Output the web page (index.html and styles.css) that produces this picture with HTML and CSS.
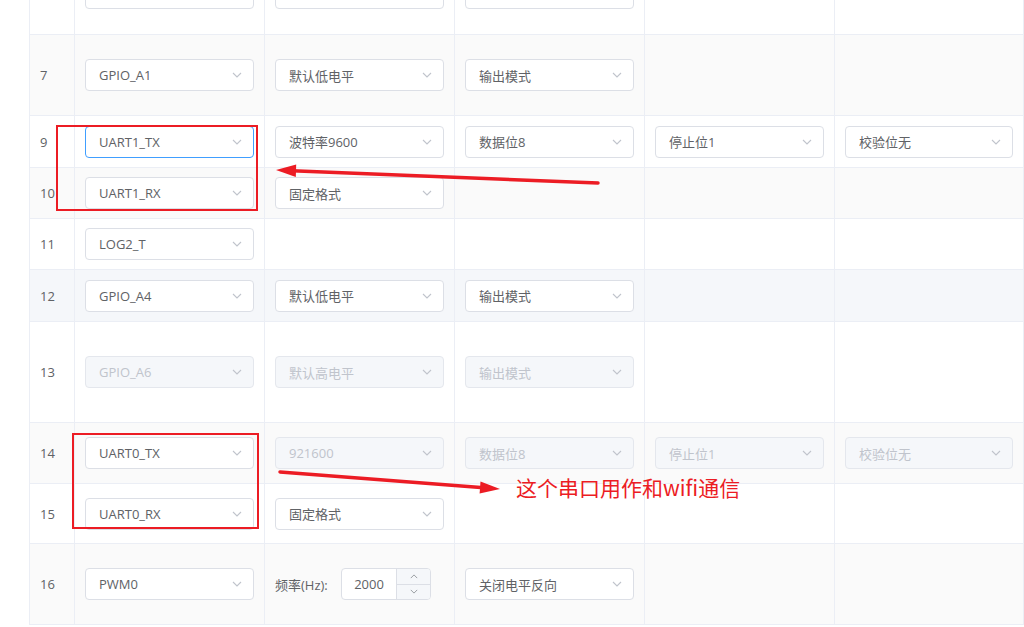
FILE: index.html
```html
<!DOCTYPE html>
<html lang="zh-CN">
<head>
<meta charset="utf-8">
<title>Pin config</title>
<link rel="stylesheet" href="styles.css">
</head>
<body>
<div class="page">
<table class="grid">
<colgroup>
<col class="c-idx"><col class="c-w"><col class="c-w"><col class="c-w"><col class="c-w"><col class="c-last">
</colgroup>
<tbody>
<tr class="h81 first">
<td class="idx"></td>
<td><div class="sel"><span>LOG2_R</span><svg viewBox="0 0 10 6"><path d="M1 1L5 5L9 1"/></svg></div></td>
<td><div class="sel"><span></span><svg viewBox="0 0 10 6"><path d="M1 1L5 5L9 1"/></svg></div></td>
<td><div class="sel"><span></span><svg viewBox="0 0 10 6"><path d="M1 1L5 5L9 1"/></svg></div></td>
<td></td><td></td>
</tr>
<tr class="h81 stripe">
<td class="idx">7</td>
<td><div class="sel"><span>GPIO_A1</span><svg viewBox="0 0 10 6"><path d="M1 1L5 5L9 1"/></svg></div></td>
<td><div class="sel"><span>默认低电平</span><svg viewBox="0 0 10 6"><path d="M1 1L5 5L9 1"/></svg></div></td>
<td><div class="sel"><span>输出模式</span><svg viewBox="0 0 10 6"><path d="M1 1L5 5L9 1"/></svg></div></td>
<td></td><td></td>
</tr>
<tr class="h52">
<td class="idx">9</td>
<td><div class="sel focus"><span>UART1_TX</span><svg viewBox="0 0 10 6"><path d="M1 1L5 5L9 1"/></svg></div></td>
<td><div class="sel"><span>波特率9600</span><svg viewBox="0 0 10 6"><path d="M1 1L5 5L9 1"/></svg></div></td>
<td><div class="sel"><span>数据位8</span><svg viewBox="0 0 10 6"><path d="M1 1L5 5L9 1"/></svg></div></td>
<td><div class="sel"><span>停止位1</span><svg viewBox="0 0 10 6"><path d="M1 1L5 5L9 1"/></svg></div></td>
<td><div class="sel"><span>校验位无</span><svg viewBox="0 0 10 6"><path d="M1 1L5 5L9 1"/></svg></div></td>
</tr>
<tr class="h51 stripe">
<td class="idx">10</td>
<td><div class="sel"><span>UART1_RX</span><svg viewBox="0 0 10 6"><path d="M1 1L5 5L9 1"/></svg></div></td>
<td><div class="sel"><span>固定格式</span><svg viewBox="0 0 10 6"><path d="M1 1L5 5L9 1"/></svg></div></td>
<td></td><td></td><td></td>
</tr>
<tr class="h51">
<td class="idx">11</td>
<td><div class="sel"><span>LOG2_T</span><svg viewBox="0 0 10 6"><path d="M1 1L5 5L9 1"/></svg></div></td>
<td></td><td></td><td></td><td></td>
</tr>
<tr class="h52 hover">
<td class="idx">12</td>
<td><div class="sel"><span>GPIO_A4</span><svg viewBox="0 0 10 6"><path d="M1 1L5 5L9 1"/></svg></div></td>
<td><div class="sel"><span>默认低电平</span><svg viewBox="0 0 10 6"><path d="M1 1L5 5L9 1"/></svg></div></td>
<td><div class="sel"><span>输出模式</span><svg viewBox="0 0 10 6"><path d="M1 1L5 5L9 1"/></svg></div></td>
<td></td><td></td>
</tr>
<tr class="h101">
<td class="idx">13</td>
<td><div class="sel dis"><span>GPIO_A6</span><svg viewBox="0 0 10 6"><path d="M1 1L5 5L9 1"/></svg></div></td>
<td><div class="sel dis"><span>默认高电平</span><svg viewBox="0 0 10 6"><path d="M1 1L5 5L9 1"/></svg></div></td>
<td><div class="sel dis"><span>输出模式</span><svg viewBox="0 0 10 6"><path d="M1 1L5 5L9 1"/></svg></div></td>
<td></td><td></td>
</tr>
<tr class="h61 stripe">
<td class="idx">14</td>
<td><div class="sel"><span>UART0_TX</span><svg viewBox="0 0 10 6"><path d="M1 1L5 5L9 1"/></svg></div></td>
<td><div class="sel dis"><span>921600</span><svg viewBox="0 0 10 6"><path d="M1 1L5 5L9 1"/></svg></div></td>
<td><div class="sel dis"><span>数据位8</span><svg viewBox="0 0 10 6"><path d="M1 1L5 5L9 1"/></svg></div></td>
<td><div class="sel dis"><span>停止位1</span><svg viewBox="0 0 10 6"><path d="M1 1L5 5L9 1"/></svg></div></td>
<td><div class="sel dis"><span>校验位无</span><svg viewBox="0 0 10 6"><path d="M1 1L5 5L9 1"/></svg></div></td>
</tr>
<tr class="h60">
<td class="idx">15</td>
<td><div class="sel"><span>UART0_RX</span><svg viewBox="0 0 10 6"><path d="M1 1L5 5L9 1"/></svg></div></td>
<td><div class="sel"><span>固定格式</span><svg viewBox="0 0 10 6"><path d="M1 1L5 5L9 1"/></svg></div></td>
<td></td><td></td><td></td>
</tr>
<tr class="h81 stripe">
<td class="idx">16</td>
<td><div class="sel"><span>PWM0</span><svg viewBox="0 0 10 6"><path d="M1 1L5 5L9 1"/></svg></div></td>
<td>
<div class="freq">
<span class="freq-label">频率(Hz):</span>
<div class="num">
<div class="num-val">2000</div>
<div class="num-ctrl">
<div><svg viewBox="0 0 10 6"><path d="M1 5L5 1L9 5"/></svg></div>
<div><svg viewBox="0 0 10 6"><path d="M1 1L5 5L9 1"/></svg></div>
</div>
</div>
</div>
</td>
<td><div class="sel"><span>关闭电平反向</span><svg viewBox="0 0 10 6"><path d="M1 1L5 5L9 1"/></svg></div></td>
<td></td><td></td>
</tr>
</tbody>
</table>

<svg class="marks" viewBox="0 0 1024 627">
<rect x="57" y="126" width="200" height="84"/>
<rect x="73" y="434" width="185" height="94"/>
<line x1="598" y1="183" x2="292" y2="170.8"/>
<polygon points="276,170 296.2,164.6 295.8,177"/>
<line x1="280" y1="472" x2="484" y2="487.8"/>
<polygon points="500,489 480.5,481.4 479.6,493.6"/>
</svg>
<div class="note">这个串口用作和wifi通信</div>
</div>
</body>
</html>
```

FILE: styles.css
```css
* { box-sizing: border-box; }

html, body {
  margin: 0;
  padding: 0;
  background: #fff;
}

body {
  font-family: "Open Sans", "Noto Sans CJK SC", sans-serif;
  font-size: 13px;
  color: #606266;
}

.page {
  position: relative;
  width: 1024px;
  height: 627px;
  overflow: hidden;
}

.grid {
  border-collapse: collapse;
  table-layout: fixed;
  width: 994px;
  margin: -47px 0 0 29px;
}

.c-idx { width: 45px; }
.c-w { width: 190px; }
.c-last { width: 189px; }

.grid td {
  border: 1px solid #ebeef5;
  padding: 0 10px;
  vertical-align: middle;
  background: #fff;
}

.grid td.idx {
  padding-left: 10px;
  font-size: 13px;
}

.grid tr.first td { padding-bottom: 2px; }

.grid tr.stripe td { background: #fafafa; }
.grid tr.hover td { background: #f5f7fa; }

.h51 { height: 51px; }
.h52 { height: 52px; }
.h60 { height: 60px; }
.h61 { height: 61px; }
.h81 { height: 81px; }
.h101 { height: 101px; }

.sel {
  display: flex;
  align-items: center;
  height: 32px;
  border: 1px solid #dcdfe6;
  border-radius: 4px;
  background: #fff;
  padding: 0 11px 0 13px;
}

.sel span {
  flex: 1;
  white-space: nowrap;
  overflow: hidden;
}

.sel svg,
.num-ctrl svg {
  width: 10px;
  height: 6px;
  flex: none;
  fill: none;
  stroke: #c0c4cc;
  stroke-width: 1.1;
}

.sel.dis {
  background: #f5f7fa;
  border-color: #e4e7ed;
  color: #c0c4cc;
}

.sel.focus { border-color: #409eff; }

.freq {
  display: flex;
  align-items: center;
}

.freq-label {
  width: 66px;
  flex: none;
  white-space: nowrap;
}

.num {
  display: flex;
  width: 90px;
  height: 32px;
  border: 1px solid #dcdfe6;
  border-radius: 4px;
  overflow: hidden;
  background: #fff;
}

.num-val {
  flex: 1;
  display: flex;
  align-items: center;
  justify-content: center;
  font-size: 13px;
  color: #606266;
}

.num-ctrl {
  width: 34px;
  flex: none;
  display: flex;
  flex-direction: column;
  border-left: 1px solid #dcdfe6;
  background: #f5f7fa;
}

.num-ctrl div {
  flex: 1;
  display: flex;
  align-items: center;
  justify-content: center;
}

.num-ctrl div + div { border-top: 1px solid #dcdfe6; }

.num-ctrl svg {
  width: 8px;
  height: 5px;
  stroke: #909399;
}

.marks {
  position: absolute;
  left: 0;
  top: 0;
  width: 1024px;
  height: 627px;
  pointer-events: none;
}

.marks rect {
  fill: none;
  stroke: #ec1c24;
  stroke-width: 2;
}

.marks line {
  stroke: #ec1c24;
  stroke-width: 3.5;
  stroke-linecap: round;
}

.marks polygon { fill: #ec1c24; }

.note {
  position: absolute;
  left: 516px;
  top: 475px;
  font-family: "Noto Sans CJK SC", sans-serif;
  font-size: 21px;
  line-height: 24px;
  color: #ec1c24;
  white-space: nowrap;
}
```
